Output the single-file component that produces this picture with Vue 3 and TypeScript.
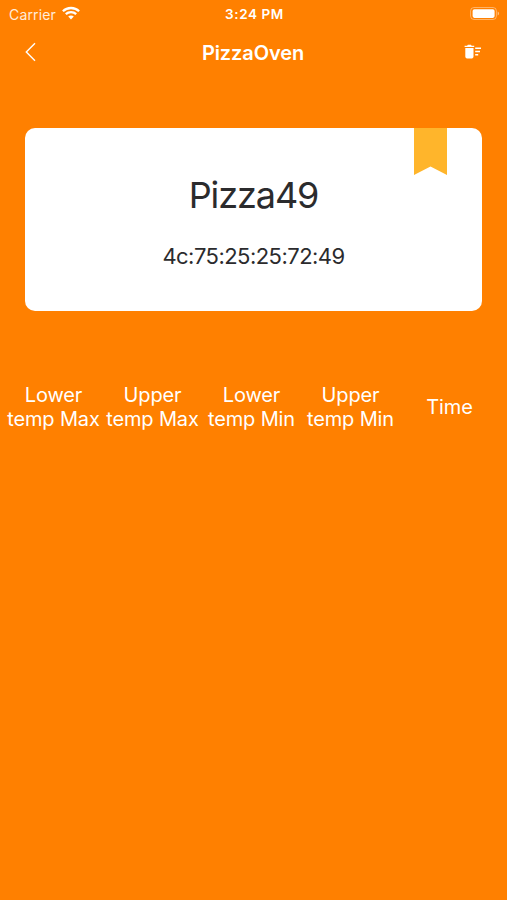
<script setup lang="ts">
interface Device {
  name: string
  address: string
}

const device: Device = { name: 'Pizza49', address: '4c:75:25:25:72:49' }

const columns: string[][] = [
  ['Lower', 'temp Max'],
  ['Upper', 'temp Max'],
  ['Lower', 'temp Min'],
  ['Upper', 'temp Min'],
  ['Time'],
]
</script>

<template>
  <main class="screen">
    <div class="status">
      <div class="carrier">
        <span class="carrier-name">Carrier</span>
        <svg class="wifi" width="18" height="14" viewBox="0 0 18 14" fill="none" stroke="#fff" stroke-width="2.3">
          <path d="M0.9 5.2C5.3 0.9 12.7 0.9 17.1 5.2" />
          <path d="M3.8 8.2C6.7 5.4 11.3 5.4 14.2 8.2" />
          <path d="M6.2 10.5C7.8 9 10.2 9 11.8 10.5L9 13.4Z" fill="#fff" stroke="none" />
        </svg>
      </div>
      <span class="clock">3:24 PM</span>
      <svg class="battery" width="30" height="14" viewBox="0 0 30 14">
        <rect x="0.6" y="0.5" width="25.8" height="12" rx="3.4" fill="none" stroke="#fff" stroke-opacity="0.4" stroke-width="1" />
        <rect x="2.6" y="2.3" width="22" height="8.6" rx="1.8" fill="#fff" />
        <path d="M27.7 4.4C29.5 5.1 29.5 7.9 27.7 8.6Z" fill="#fff" fill-opacity="0.5" />
      </svg>
    </div>

    <header class="nav">
      <button class="icon-button" aria-label="Back">
        <svg width="12" height="20" viewBox="0 0 12 20" fill="none" stroke="#fff" stroke-width="1.4">
          <path d="M11 1.2L2.3 10L11 18.8" />
        </svg>
      </button>
      <h1 class="title">PizzaOven</h1>
      <button class="icon-button" aria-label="Clear">
        <svg width="18" height="16" viewBox="0 0 18 16" fill="#fff">
          <path d="M0.6 1.8H3.1L3.9 0.8H6.9L7.7 1.8H10.2V3.1H0.6Z" />
          <path d="M1.3 3.9H9.5V12.6C9.5 13.8 8.8 14.4 7.8 14.4H3C2 14.4 1.3 13.8 1.3 12.6Z" />
          <path d="M11.2 3.5H17V5H11.2ZM11.2 6.8H16V8.3H11.2ZM11.2 10.1H14.2V11.6H11.2Z" />
        </svg>
      </button>
    </header>

    <section class="card">
      <svg class="ribbon" width="33" height="47" viewBox="0 0 33 47">
        <path d="M0 0H33V47L16.5 38.5L0 47Z" fill="#ffb52b" />
      </svg>
      <h2 class="name">{{ device.name }}</h2>
      <p class="address">{{ device.address }}</p>
    </section>

    <div class="columns">
      <div v-for="(lines, index) in columns" :key="index" class="column">
        <span v-for="line in lines" :key="line">{{ line }}</span>
      </div>
    </div>
  </main>
</template>

<style>
body {
  margin: 0;
  background: #ff8000;
}
</style>

<style scoped>
.screen {
  box-sizing: border-box;
  width: 100%;
  min-height: 900px;
  background: #ff8000;
  color: #fff;
  font-family: Inter, "Liberation Sans", sans-serif;
}

.status {
  display: grid;
  grid-template-columns: 1fr auto 1fr;
  align-items: center;
  height: 27px;
  padding: 0 7px 0 9px;
}

.carrier {
  display: flex;
  align-items: center;
  gap: 6px;
}

.carrier-name {
  font-size: 14px;
  line-height: 27px;
  letter-spacing: 0.15px;
  opacity: 0.85;
}

.wifi {
  margin-top: -2px;
}

.clock {
  padding-top: 1px;
  font-size: 13.5px;
  font-weight: 600;
  line-height: 27px;
  letter-spacing: 0.6px;
}

.battery {
  justify-self: end;
}

.nav {
  display: grid;
  grid-template-columns: 1fr auto 1fr;
  align-items: center;
  height: 50px;
  padding: 0 25px 0 24px;
}

.icon-button {
  display: flex;
  padding: 0;
  border: 0;
  background: none;
}

.icon-button:last-child {
  justify-self: end;
}

.title {
  margin: 0;
  padding-top: 2px;
  font-size: 20px;
  font-weight: 600;
  line-height: 48px;
  letter-spacing: -0.1px;
}

.card {
  position: relative;
  box-sizing: border-box;
  height: 183px;
  margin: 51px 25px 0;
  padding-top: 45px;
  border-radius: 10px;
  background: #fff;
  color: #2b2b2d;
  text-align: center;
}

.ribbon {
  position: absolute;
  top: 0;
  right: 35px;
}

.name {
  margin: 0;
  font-size: 36px;
  font-weight: 400;
  line-height: 44px;
  letter-spacing: -1.1px;
}

.address {
  margin: 25px 0 0;
  font-size: 22px;
  line-height: 28px;
  letter-spacing: -0.54px;
}

.columns {
  display: grid;
  grid-template-columns: repeat(5, 99px);
  height: 50px;
  margin: 71px 0 0 4px;
}

.column {
  display: flex;
  flex-direction: column;
  justify-content: center;
  align-items: center;
  font-size: 20px;
  line-height: 24px;
  letter-spacing: -0.15px;
  white-space: nowrap;
}
</style>
